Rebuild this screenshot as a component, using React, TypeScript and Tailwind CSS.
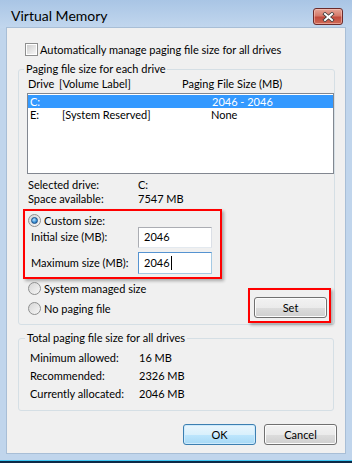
import React from "react";

function Radio({ checked }: { checked?: boolean }) {
  return (
    <span className="flex h-[13px] w-[13px] shrink-0 items-center justify-center rounded-full border border-[#8e8f8f] bg-[linear-gradient(135deg,#d6d6d6,#f7f7f7)]">
      {checked && (
        <span className="h-[7px] w-[7px] rounded-full border border-[#1b4f88] bg-[radial-gradient(circle_at_40%_35%,#bfe6ff,#3e94d6_55%,#1c5ea3)]" />
      )}
    </span>
  );
}

function Checkbox() {
  return (
    <span className="flex h-[13px] w-[13px] shrink-0 items-center justify-center border border-[#8e8f8f] bg-white">
      <span className="h-[9px] w-[9px] bg-[linear-gradient(135deg,#cfcfcf,#f6f6f6)]" />
    </span>
  );
}

function Button({ label, primary }: { label: string; primary?: boolean }) {
  return (
    <button
      className={
        primary
          ? "flex h-[21px] w-[73px] items-center justify-center rounded-[3px] border border-[#3c7fb1] bg-[linear-gradient(#eaf6fd_0%,#d9f0fc_50%,#bee6fd_50%,#a7d9f5_100%)] shadow-[inset_0_0_0_1px_#cdeafc] leading-none"
          : "flex h-[21px] w-[73px] items-center justify-center rounded-[3px] border border-[#707070] bg-[linear-gradient(#f2f2f2_0%,#ebebeb_50%,#dddddd_50%,#cfcfcf_100%)] shadow-[inset_0_0_0_1px_#fcfcfc] leading-none"
      }
    >
      {label}
    </button>
  );
}

function CloseButton() {
  return (
    <div className="ml-auto mr-[9px] mt-[8px] flex h-[17px] w-[30px] items-center justify-center rounded-[3px] border border-[#6b2b2b] bg-[linear-gradient(#e6a597_0%,#d57a6a_45%,#c24a3c_55%,#cf6b58_100%)] shadow-[inset_0_0_0_1px_rgba(255,210,200,0.5)]">
      <svg width="13" height="10" viewBox="0 0 13 10">
        <path d="M3 2 L10 8 M10 2 L3 8" stroke="#3a3a3a" strokeWidth="3.6" strokeLinecap="square" />
        <path d="M3 2 L10 8 M10 2 L3 8" stroke="#ffffff" strokeWidth="2" strokeLinecap="square" />
      </svg>
    </div>
  );
}

export default function App() {
  return (
    <div className="flex h-[463px] w-[352px] flex-col overflow-hidden bg-[#c0d5ec] font-['Lato','Noto_Sans',sans-serif] text-[11px] text-black">
      {/* title bar */}
      <div className="flex h-[28px] shrink-0 items-start bg-[linear-gradient(#a9c5e5,#c2d7ee)]">
        <span className="ml-[11px] mt-[8px] text-[14px] leading-[16px]">Virtual Memory</span>
        <CloseButton />
      </div>

      {/* client area */}
      <div className="mx-[7px] flex h-[425px] shrink-0 flex-col bg-[#f0f0f0] shadow-[0_0_0_1px_#a8bed6]">
        <label className="ml-[18px] mt-[15px] flex h-[13px] items-center gap-[2px] leading-[13px]">
          <Checkbox />
          <span>Automatically manage paging file size for all drives</span>
        </label>

        <fieldset className="mx-[11px] mt-[6px] rounded-[3px] border border-[#d5dfe5] pb-[1px]">
          <legend className="ml-[5px] px-[2px] leading-[14px]">Paging file size for each drive</legend>

          <div className="mt-[1px] flex h-[14px] whitespace-nowrap pl-[9px] leading-[14px]">
            <span className="w-[31px]">Drive</span>
            <span className="w-[123px]">[Volume Label]</span>
            <span>Paging File Size (MB)</span>
          </div>

          <div className="ml-[8px] mt-[2px] h-[81px] w-[307px] border border-[#828790] bg-white pt-[1px]">
            <div className="flex h-[13px] bg-[#3399ff] pl-[2px] leading-[13px] text-white">
              <span className="w-[32px]">C:</span>
              <span className="w-[150px]"></span>
              <span>2046 - 2046</span>
            </div>
            <div className="flex h-[14px] pl-[2px] leading-[14px]">
              <span className="w-[32px]">E:</span>
              <span className="w-[149px]">[System Reserved]</span>
              <span>None</span>
            </div>
          </div>

          <div className="mt-[4px] flex h-[14px] pl-[9px] leading-[14px]">
            <span className="w-[110px]">Selected drive:</span>
            <span>C:</span>
          </div>
          <div className="flex h-[14px] pl-[9px] leading-[14px]">
            <span className="w-[110px]">Space available:</span>
            <span>7547 MB</span>
          </div>

          <div className="ml-[4px] mt-[3px] h-[70px] w-[199px] border-2 border-[#ff0000] shadow-[2px_2px_3px_rgba(0,0,0,0.3)]">
            <label className="ml-[3px] mt-[3px] flex h-[13px] items-center gap-[3px] leading-[13px]">
              <Radio checked />
              <span>Custom size:</span>
            </label>
            <div className="flex h-[21px] items-center whitespace-nowrap pl-[6px]">
              <span className="w-[107px]">Initial size (MB):</span>
              <div className="flex h-[21px] w-[74px] items-center border border-[#abadb3] border-b-[#e3e9ef] border-r-[#dbdfe6] bg-white pl-[5px]">
                2046
              </div>
            </div>
            <div className="mt-[4px] flex h-[22px] items-center whitespace-nowrap pl-[6px]">
              <span className="w-[107px]">Maximum size (MB):</span>
              <div className="flex h-[22px] w-[74px] items-center border border-[#5593d1] border-b-[#a4c9e3] border-r-[#a4c9e3] bg-white pl-[5px]">
                2046
                <span className="ml-[1px] h-[14px] w-[1px] bg-black" />
              </div>
            </div>
          </div>

          <div className="mt-[3px] flex items-end">
            <div className="mb-[8px] ml-[9px] flex flex-col gap-[7px]">
              <label className="flex h-[13px] items-center gap-[3px] leading-[13px]">
                <Radio />
                <span>System managed size</span>
              </label>
              <label className="flex h-[13px] items-center gap-[3px] leading-[13px]">
                <Radio />
                <span>No paging file</span>
              </label>
            </div>
            <div className="ml-auto mr-[3px] h-[35px] w-[83px] border-2 border-[#ff0000] pb-[3px] pl-[4px] pr-[2px] pt-[7px] shadow-[2px_2px_3px_rgba(0,0,0,0.3)]">
              <Button label="Set" />
            </div>
          </div>
        </fieldset>

        <fieldset className="mx-[11px] mt-[6px] rounded-[3px] border border-[#d5dfe5] pb-[7px]">
          <legend className="ml-[6px] px-[2px] leading-[14px]">Total paging file size for all drives</legend>
          <div className="mt-[4px] flex flex-col whitespace-nowrap pl-[11px]">
            <div className="flex h-[18px] items-center">
              <span className="w-[109px]">Minimum allowed:</span>
              <span>16 MB</span>
            </div>
            <div className="flex h-[18px] items-center">
              <span className="w-[109px]">Recommended:</span>
              <span>2326 MB</span>
            </div>
            <div className="flex h-[18px] items-center">
              <span className="w-[109px]">Currently allocated:</span>
              <span>2046 MB</span>
            </div>
          </div>
        </fieldset>

        <div className="mr-[8px] mt-[13px] flex justify-end gap-[8px]">
          <Button label="OK" primary />
          <Button label="Cancel" />
        </div>
      </div>

      <div className="h-[7px] shrink-0" />
      <div className="h-[1px] shrink-0 bg-[#3fc6f2]" />
      <div className="h-[2px] shrink-0 bg-[#0d2a47]" />
    </div>
  );
}
